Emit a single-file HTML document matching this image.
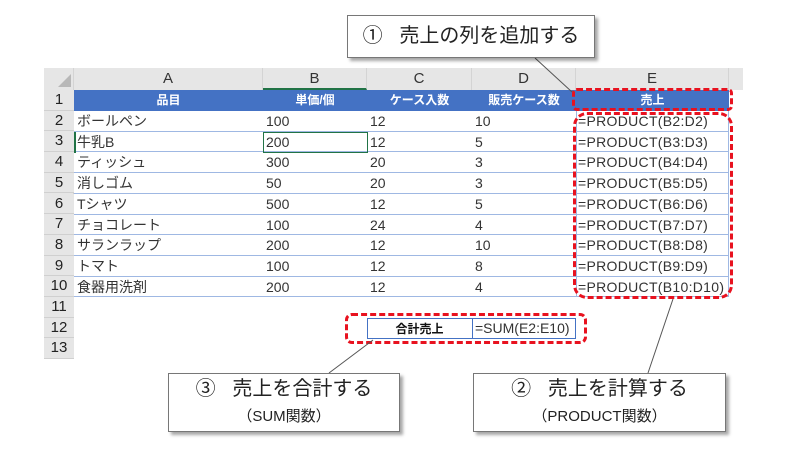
<!DOCTYPE html>
<html><head><meta charset="utf-8"><style>
body{margin:0;width:800px;height:450px;background:#fff;position:relative;overflow:hidden;font-family:"Liberation Sans","Noto Sans CJK JP",sans-serif;}
.a{position:absolute;box-sizing:border-box;}
.ch{background:#e6e6e6;color:#333;font-size:15px;text-align:center;line-height:22px;top:68px;height:22px;border-right:1px solid #d4d4d4;}
.rh{background:#e6e6e6;color:#222;font-size:15px;text-align:center;left:44px;width:30px;border-bottom:1px solid #d0d0d0;}
.c{font-size:14px;line-height:16px;height:16px;color:#333;white-space:nowrap;}
.hd{background:#4472c4;color:#fff;font-weight:bold;font-size:12px;line-height:15px;text-align:center;}
.box{background:#fff;border:1px solid #777;box-shadow:3px 3px 3px rgba(0,0,0,.35);text-align:center;color:#222;}
.red{border:3px dashed #e8121f;border-radius:10px;}
</style></head><body>
<div class="a" style="left:44px;top:68px;width:30px;height:22px;background:#e6e6e6;border-right:1px solid #d4d4d4"></div>
<svg class="a" style="left:44px;top:68px" width="30" height="22"><polygon points="27,6 27,19 14,19" fill="#b8b8b8"/></svg>
<div class="a ch" style="left:74px;width:189px">A</div>
<div class="a ch" style="left:263px;width:104px;border-bottom:2px solid #217346">B</div>
<div class="a ch" style="left:367px;width:105px">C</div>
<div class="a ch" style="left:472px;width:104px">D</div>
<div class="a ch" style="left:576px;width:153px">E</div>
<div class="a ch" style="left:729px;width:14px;border:none"></div>
<div class="a" style="left:44px;top:90px;width:30px;height:268px;background:#e6e6e6;border-right:1px solid #ccc"></div>
<div id="rows"></div>
<div class="a hd" style="left:74px;top:90px;width:655px;height:21px"></div>
<div class="a hd" style="left:74px;top:93px;width:189px">品目</div>
<div class="a hd" style="left:263px;top:93px;width:104px">単価/個</div>
<div class="a hd" style="left:367px;top:93px;width:105px">ケース入数</div>
<div class="a hd" style="left:472px;top:93px;width:104px">販売ケース数</div>
<div class="a hd" style="left:576px;top:93px;width:153px">売上</div>
<script>
var d=[["ボールペン",100,12,10],["牛乳B",200,12,5],["ティッシュ",300,20,3],["消しゴム",50,20,3],["Tシャツ",500,12,5],["チョコレート",100,24,4],["サランラップ",200,12,10],["トマト",100,12,8],["食器用洗剤",200,12,4]];
var h="";var rh=20.7;
for(var i=1;i<=13;i++){var t=90+(i-1)*rh;h+='<div class="a rh" style="top:'+t+'px;height:'+rh+'px;line-height:'+rh+'px">'+i+'</div>';}
for(var i=0;i<9;i++){var t=111+i*rh;var r=d[i];
h+='<div class="a" style="left:74px;top:'+(t+rh-1)+'px;width:655px;height:1px;background:#9fb8e3"></div>';
h+='<div class="a c" style="left:77px;top:'+(t+2)+'px">'+r[0]+'</div>';
h+='<div class="a c" style="left:266px;top:'+(t+2)+'px">'+r[1]+'</div>';
h+='<div class="a c" style="left:370px;top:'+(t+2)+'px">'+r[2]+'</div>';
h+='<div class="a c" style="left:475px;top:'+(t+2)+'px">'+r[3]+'</div>';
h+='<div class="a c" style="left:578px;top:'+(t+2)+'px;letter-spacing:0.3px">=PRODUCT(B'+(i+2)+':D'+(i+2)+')</div>';}
document.getElementById('rows').innerHTML=h;
</script>
<div class="a" style="left:576px;top:111px;width:1px;height:186px;background:#9fb8e3"></div>
<div class="a" style="left:728px;top:111px;width:1px;height:186px;background:#9fb8e3"></div>
<div class="a" style="left:263px;top:132px;width:105px;height:21px;border:1.5px solid #217346"></div>
<div class="a" style="left:74px;top:132px;width:2px;height:21px;background:#217346"></div>
<div class="a" style="left:367px;top:318px;width:209px;height:21px;border:1.5px solid #4472c4"></div>
<div class="a" style="left:472px;top:318px;width:1px;height:21px;background:#4472c4"></div>
<div class="a c" style="left:367px;top:321px;width:105px;text-align:center;font-weight:bold;font-size:12px;color:#111">合計売上</div>
<div class="a c" style="left:475px;top:320px">=SUM(E2:E10)</div>
<div class="a red" style="left:572px;top:88px;width:161px;height:23px;border-radius:5px"></div>
<div class="a red" style="left:573px;top:112px;width:160px;height:187px;border-radius:14px"></div>
<div class="a red" style="left:345px;top:313px;width:242px;height:31px;border-radius:7px"></div>
<svg class="a" style="left:0;top:0" width="800" height="450"><g stroke="#555" stroke-width="1"><line x1="535" y1="58" x2="572" y2="92"/><line x1="673" y1="299" x2="648" y2="373"/><line x1="373" y1="340" x2="329" y2="373"/></g></svg>
<div class="a box" style="left:347px;top:15px;width:248px;height:43px;font-size:20px;line-height:41px">①&nbsp;&nbsp;&nbsp;売上の列を追加する</div>
<div class="a box" style="left:168px;top:373px;width:232px;height:59px;font-size:20px;padding-top:2px;line-height:26px">③&nbsp;&nbsp;&nbsp;売上を合計する<br><span style="font-size:15px;line-height:22px">（SUM関数）</span></div>
<div class="a box" style="left:473px;top:373px;width:253px;height:59px;font-size:20px;padding-top:2px;line-height:26px">②&nbsp;&nbsp;&nbsp;売上を計算する<br><span style="font-size:15px;line-height:22px">（PRODUCT関数）</span></div>
</body></html>
